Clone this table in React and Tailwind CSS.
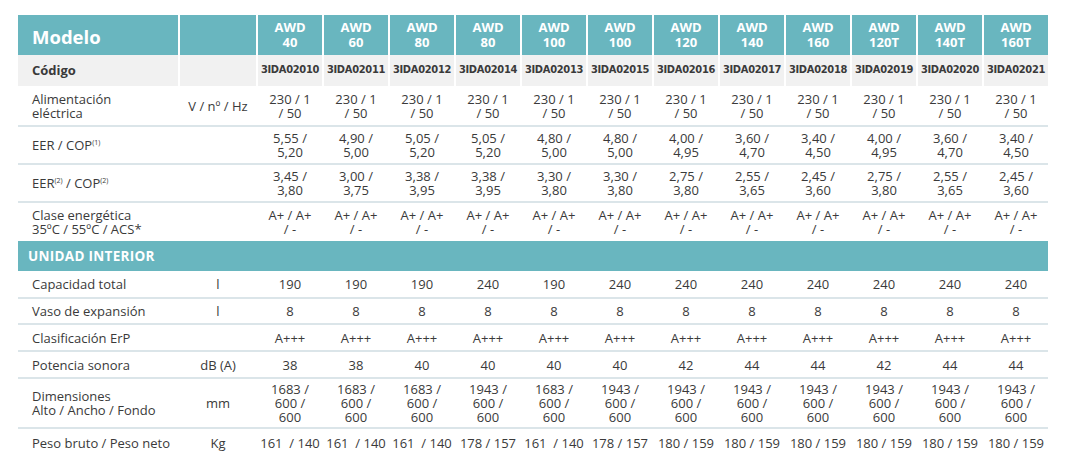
const models = ["40", "60", "80", "80", "100", "100", "120", "140", "160", "120T", "140T", "160T"];
const codes = [
  "3IDA02010", "3IDA02011", "3IDA02012", "3IDA02014", "3IDA02013", "3IDA02015",
  "3IDA02016", "3IDA02017", "3IDA02018", "3IDA02019", "3IDA02020", "3IDA02021",
];

const pair = (list) => list.map((s) => s.split("|"));

const groupA = [
  {
    label: ["Alimentación", "eléctrica"],
    unit: "V / nº / Hz",
    h: "h-[40px]",
    values: Array(12).fill(["230 / 1", "/ 50"]),
  },
  {
    label: [<>EER / COP<sup className="text-[7px] top-[-0.7em]">(1)</sup></>],
    h: "h-[38px]",
    values: pair([
      "5,55 /|5,20", "4,90 /|5,00", "5,05 /|5,20", "5,05 /|5,20", "4,80 /|5,00", "4,80 /|5,00",
      "4,00 /|4,95", "3,60 /|4,70", "3,40 /|4,50", "4,00 /|4,95", "3,60 /|4,70", "3,40 /|4,50",
    ]),
  },
  {
    label: [
      <>
        EER<sup className="text-[7px] top-[-0.7em]">(2)</sup> / COP<sup className="text-[7px] top-[-0.7em]">(2)</sup>
      </>,
    ],
    h: "h-[38px]",
    values: pair([
      "3,45 /|3,80", "3,00 /|3,75", "3,38 /|3,95", "3,38 /|3,95", "3,30 /|3,80", "3,30 /|3,80",
      "2,75 /|3,80", "2,55 /|3,65", "2,45 /|3,60", "2,75 /|3,80", "2,55 /|3,65", "2,45 /|3,60",
    ]),
  },
  {
    label: ["Clase energética", "35ºC / 55ºC / ACS*"],
    h: "h-[38px]",
    last: true,
    values: Array(12).fill(["A+ / A+", "/ -"]),
  },
];

const dimA = ["1683 /", "600 /", "600"];
const dimB = ["1943 /", "600 /", "600"];
const pesoA = ["161  / 140"];
const pesoB = ["178 / 157"];
const pesoC = ["180 / 159"];

const groupB = [
  {
    label: ["Capacidad total"],
    unit: "l",
    h: "h-[28px]",
    values: ["190", "190", "190", "240", "190", "240", "240", "240", "240", "240", "240", "240"].map((v) => [v]),
  },
  { label: ["Vaso de expansión"], unit: "l", h: "h-[26px]", values: Array(12).fill(["8"]) },
  { label: ["Clasificación ErP"], h: "h-[27px]", values: Array(12).fill(["A+++"]) },
  {
    label: ["Potencia sonora"],
    unit: "dB (A)",
    h: "h-[27px]",
    values: ["38", "38", "40", "40", "40", "40", "42", "44", "44", "42", "44", "44"].map((v) => [v]),
  },
  {
    label: ["Dimensiones", "Alto / Ancho / Fondo"],
    unit: "mm",
    h: "h-[50px]",
    values: [dimA, dimA, dimA, dimB, dimA, dimB, dimB, dimB, dimB, dimB, dimB, dimB],
  },
  {
    label: ["Peso bruto / Peso neto"],
    unit: "Kg",
    h: "h-[28px]",
    last: true,
    values: [pesoA, pesoA, pesoA, pesoB, pesoA, pesoB, pesoC, pesoC, pesoC, pesoC, pesoC, pesoC],
  },
];

const cols = "grid grid-cols-[160px_76px_repeat(12,64px)] gap-x-[2px]";

const Row = ({ row }) => (
  <div className={`${cols} ${row.h} ${row.last ? "" : "border-b-2 border-[#dbe5e9]"} text-[13px] leading-[14px] text-[#3a3a3a]`}>
    <div className="flex flex-col justify-center pl-[14px]">
      {row.label.map((l, i) => (
        <span key={i} className="whitespace-pre">{l}</span>
      ))}
    </div>
    <div className="flex items-center justify-center">{row.unit}</div>
    {row.values.map((lines, i) => (
      <div key={i} className="flex flex-col items-center justify-center text-center">
        {lines.map((l, j) => (
          <span key={j} className="whitespace-pre">{l}</span>
        ))}
      </div>
    ))}
  </div>
);

export default function App() {
  return (
    <div className="w-[1074px] h-[470px] bg-white pt-[15px] pl-[18px] font-['Open_Sans','Liberation_Sans',sans-serif]">
      <div className="w-[1030px]">
        {/* Header */}
        <div className={`${cols} h-[40px]`}>
          <div className="bg-[#69b6bf] flex items-center pl-[14px] pt-[3px] text-white font-bold text-[18.5px]">Modelo</div>
          <div className="bg-[#69b6bf]" />
          {models.map((m, i) => (
            <div key={i} className="bg-[#69b6bf] flex flex-col items-center justify-center text-white font-bold text-[13px] leading-[15px]">
              <span>AWD</span>
              <span>{m}</span>
            </div>
          ))}
        </div>

        {/* Código */}
        <div className={`${cols} h-[31px] mb-[1px]`}>
          <div className="bg-[#f1f1f1] flex items-center pl-[14px] font-bold text-[13px] text-[#3a3a3a]">Código</div>
          <div className="bg-[#f1f1f1]" />
          {codes.map((c) => (
            <div
              key={c}
              className="bg-[#f1f1f1] flex items-center justify-center font-bold text-[11px] tracking-[-0.3px] text-[#3a3a3a] font-['DejaVu_Sans_Condensed','Liberation_Sans_Narrow',sans-serif]"
            >
              {c}
            </div>
          ))}
        </div>

        {groupA.map((r, i) => (
          <Row key={i} row={r} />
        ))}

        <div className="h-[30px] bg-[#69b6bf] flex items-center pl-[10px] text-white font-bold text-[13.5px] tracking-[0.3px]">
          UNIDAD INTERIOR
        </div>

        {groupB.map((r, i) => (
          <Row key={i} row={r} />
        ))}
      </div>
    </div>
  );
}
